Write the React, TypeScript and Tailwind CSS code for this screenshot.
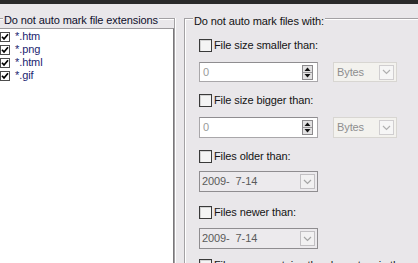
import React from "react";

function ListCheck() {
  return (
    <div className="w-[10px] h-[10px] border border-[#4d4d4d] bg-white flex items-center justify-center shrink-0">
      <svg width="8" height="8" viewBox="0 0 8 8">
        <path d="M1 3.8 L3 6 L7 1.2" fill="none" stroke="#000" strokeWidth="1.7" />
      </svg>
    </div>
  );
}

function CheckRow({ label }: { label: string }) {
  return (
    <div className="flex items-center h-[13px]">
      <div className="w-[13px] h-[13px] border border-[#3a3a3a] bg-[#f4f4f4] shadow-[inset_1px_1px_0_#d2d2d2] shrink-0" />
      <span className="ml-[2px] text-[#141414] whitespace-nowrap">{label}</span>
    </div>
  );
}

function Chevron({ color }: { color: string }) {
  return (
    <svg width="9" height="6" viewBox="0 0 9 6">
      <path d="M1 1 L4.5 4.5 L8 1" fill="none" stroke={color} strokeWidth="1.2" />
    </svg>
  );
}

function Spinner() {
  return (
    <svg width="11" height="15" viewBox="0 0 11 15" className="shrink-0 mr-[4px]">
      <rect x="0.5" y="0.5" width="10" height="14" fill="#e2e1e2" stroke="#8c8a8d" />
      <line x1="1" y1="7.5" x2="10" y2="7.5" stroke="#9a989b" />
      <path d="M2.5 6 L5.5 2.5 L8.5 6 Z" fill="#111" />
      <path d="M2.5 9 L5.5 12.5 L8.5 9 Z" fill="#111" />
    </svg>
  );
}

function SpinRow({ h }: { h: string }) {
  return (
    <div className="flex items-start">
      <div className={`w-[119px] ${h} border border-[#a9a7aa] border-t-[#8f8d90] bg-white flex items-center`}>
        <span className="pl-[3px] flex-1 text-[#9a9a9a]">0</span>
        <Spinner />
      </div>
      <div className={`ml-[15px] w-[64px] ${h} border border-[#d8d6d2] bg-[#f3f2ee] flex items-center`}>
        <span className="pl-[3px] flex-1 text-[#8e8e8e]">Bytes</span>
        <div className="w-[15px] h-[15px] mr-[2px] border border-[#d0ced0] bg-[#f6f6f6] flex items-center justify-center">
          <Chevron color="#b0b0b0" />
        </div>
      </div>
    </div>
  );
}

function DateBox() {
  return (
    <div className="w-[119px] h-[21px] border border-[#8f8d90] bg-[#eceaed] flex items-center">
      <span className="pl-[2px] flex-1 text-[#5a5a5a] whitespace-pre">2009-  7-14</span>
      <div className="w-[15px] h-[15px] mr-[2px] border border-[#c2c0c3] bg-[#f2f1f2] flex items-center justify-center">
        <Chevron color="#a5a5a5" />
      </div>
    </div>
  );
}

export default function App() {
  const items = ["*.htm", "*.png", "*.html", "*.gif"];
  return (
    <div className="w-[418px] h-[263px] overflow-hidden bg-[#e9e7ea] font-['Liberation_Sans',Arial,sans-serif] text-[11px] leading-[13px] tracking-[-0.1px] text-[#111] flex flex-col">
      <div className="h-[4px] bg-[#2a2a2a] shrink-0" />
      <div className="flex flex-1 min-h-0">
        {/* left group */}
        <div className="relative w-[175px] shrink-0 mt-[14px] border-t border-r border-[#a3a1a4] shadow-[inset_0_1px_0_#fff,1px_0_0_#fff] flex flex-col pt-[9px]">
          <span className="absolute top-[-5px] left-[3px] px-[1px] bg-[#e9e7ea] text-[#0e0f2c] whitespace-nowrap">
            Do not auto mark file extensions
          </span>
          <div className="flex-1 bg-white border-t border-r border-[#9c9a9d] border-r-[#7a787b] pt-[1px]">
            {items.map((it) => (
              <div key={it} className="flex items-center h-[13px]">
                <ListCheck />
                <span className="ml-[5px] text-[#1b2570]">{it}</span>
              </div>
            ))}
          </div>
        </div>
        {/* right group */}
        <div className="relative w-[260px] shrink-0 ml-[9px] mt-[14px] border-t border-l border-[#a3a1a4] shadow-[inset_1px_1px_0_#fff] pt-[20px] pl-[14px]">
          <span className="absolute top-[-4px] left-[8px] px-[1px] bg-[#e9e7ea] text-[#111] whitespace-nowrap">
            Do not auto mark files with:
          </span>
          <CheckRow label="File size smaller than:" />
          <div className="mt-[10px]">
            <SpinRow h="h-[20px]" />
          </div>
          <div className="mt-[12px]">
            <CheckRow label="File size bigger than:" />
          </div>
          <div className="mt-[10px]">
            <SpinRow h="h-[21px]" />
          </div>
          <div className="mt-[12px]">
            <CheckRow label="Files older than:" />
          </div>
          <div className="mt-[8px]">
            <DateBox />
          </div>
          <div className="mt-[14px]">
            <CheckRow label="Files newer than:" />
          </div>
          <div className="mt-[9px]">
            <DateBox />
          </div>
          <div className="mt-[10px]">
            <CheckRow label="File name contains the characters in the mask:" />
          </div>
        </div>
      </div>
    </div>
  );
}
